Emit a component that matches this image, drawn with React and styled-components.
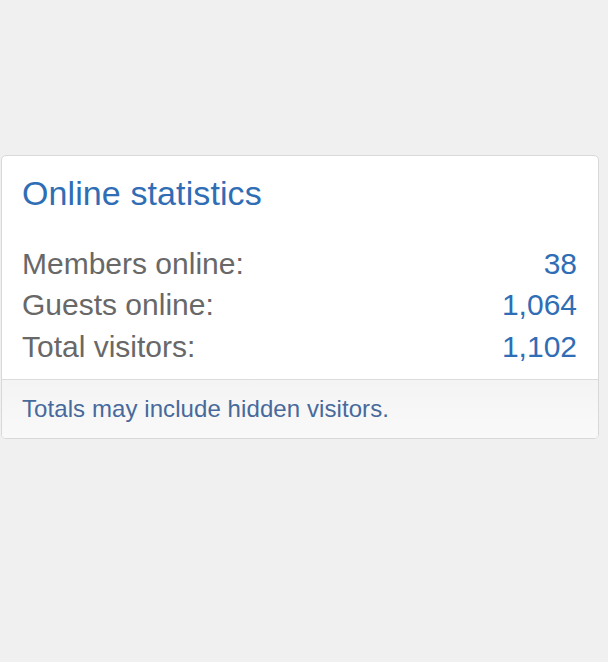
import React from 'react'
import styled, { createGlobalStyle } from 'styled-components'

const GlobalStyle = createGlobalStyle`
  html, body {
    margin: 0;
    padding: 0;
    background: #f0f0f0;
    font-family: "Helvetica Neue", Helvetica, "Liberation Sans", Arial, sans-serif;
  }
`

const Page = styled.div`
  padding: 155px 9px 0 1px;
  min-height: 662px;
  box-sizing: border-box;
`

const Card = styled.div`
  width: 598px;
  box-sizing: border-box;
  background: #fff;
  border: 1px solid #d8d8d8;
  border-radius: 5px;
  overflow: hidden;
`

const Body = styled.div`
  padding: 16.5px 21px 12px 20px;
`

const Title = styled.h3`
  margin: 0 0 29px;
  font-size: 34px;
  line-height: 41px;
  font-weight: 400;
  letter-spacing: 0.1px;
  color: #2f6db5;
`

const StatList = styled.dl`
  margin: 0;
`

const Row = styled.div`
  display: flex;
  justify-content: space-between;
  align-items: baseline;
  font-size: 30px;
  line-height: 41.5px;
`

const Label = styled.dt`
  color: #686868;
`

const Value = styled.dd`
  margin: 0;
  color: #2f6db5;
`

const Footer = styled.div`
  border-top: 1px solid #dcdcdc;
  background: linear-gradient(to bottom, #f4f4f4, #f9f9f9);
  padding: 12px 21px 12px 20px;
  font-size: 24px;
  line-height: 34px;
  letter-spacing: 0.08px;
  color: #47699b;
`

const stats = [
  { label: 'Members online:', value: '38' },
  { label: 'Guests online:', value: '1,064' },
  { label: 'Total visitors:', value: '1,102' },
]

export default function App() {
  return (
    <>
      <GlobalStyle />
      <Page>
        <Card>
          <Body>
            <Title>Online statistics</Title>
            <StatList>
              {stats.map((s) => (
                <Row key={s.label}>
                  <Label>{s.label}</Label>
                  <Value>{s.value}</Value>
                </Row>
              ))}
            </StatList>
          </Body>
          <Footer>Totals may include hidden visitors.</Footer>
        </Card>
      </Page>
    </>
  )
}
